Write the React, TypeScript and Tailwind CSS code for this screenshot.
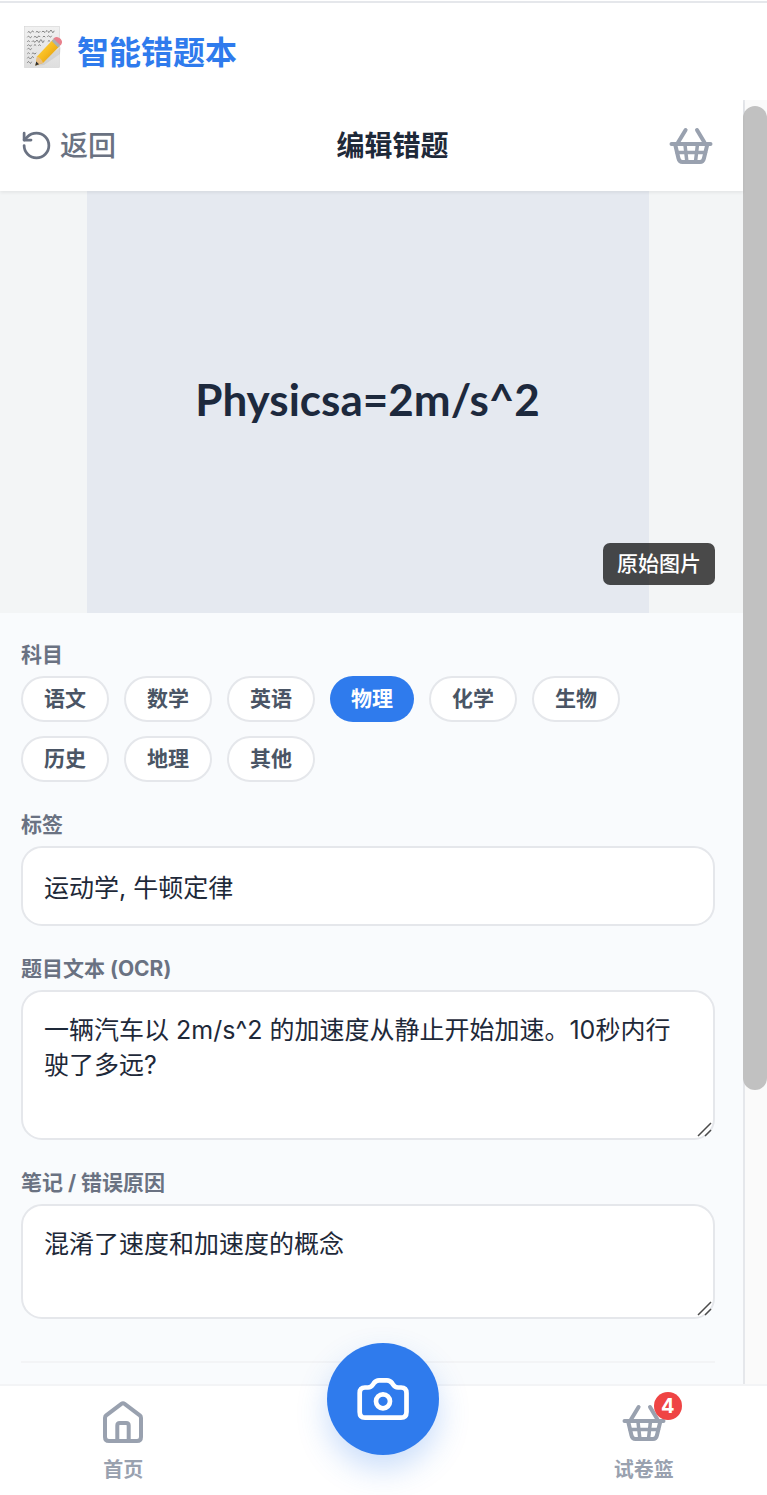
import React, { useState } from "react";
import { RotateCcw } from "lucide-react";

const SUBJECTS = ["语文", "数学", "英语", "物理", "化学", "生物", "历史", "地理", "其他"];

const BasketIcon = () => (
  <svg
    className="w-11 h-11"
    viewBox="0 0 44 44"
    fill="none"
    stroke="currentColor"
    strokeWidth="4"
    strokeLinecap="round"
    strokeLinejoin="round"
    aria-hidden="true"
  >
    <path d="M16.6 6L9 18.5M28 6l7.5 12.5M2.5 20h39" />
    <path d="M6.3 21l3.2 13.5Q10.3 38 13.5 38H31q3.1 0 3.9-3.5L38.2 21" />
    <path d="M16 21l1.8 16M28.4 21l-1.8 16M8 28.6h28.5" strokeWidth="3.5" />
  </svg>
);

const HomeIcon = () => (
  <svg
    className="w-11 h-11"
    viewBox="0 0 44 44"
    fill="none"
    stroke="currentColor"
    strokeWidth="4"
    strokeLinejoin="round"
    aria-hidden="true"
  >
    <path d="M4 17q0-1.6 1.2-2.6L20.4 2.8q1.6-1.2 3.2 0l15.2 11.6Q40 15.4 40 17v19q0 4-4 4H8q-4 0-4-4z" />
    <path d="M16.3 39V24.5q0-2.5 2.5-2.5h6.4q2.5 0 2.5 2.5V39" />
  </svg>
);

const CameraIcon = () => (
  <svg
    className="w-14 h-14"
    viewBox="0 0 56 56"
    fill="none"
    stroke="currentColor"
    strokeWidth="4.7"
    strokeLinejoin="round"
    aria-hidden="true"
  >
    <path d="M4.7 22q0-5.5 5.3-5.5h3q3 0 5-3l1-1.5q2-2.7 5-2.7h8q3 0 5 2.7l1 1.5q2 3 5 3h3q5.5 0 5.5 5.5v19q0 5.7-5.5 5.7H10q-5.3 0-5.3-5.7z" />
    <circle cx="28" cy="30.3" r="7" />
  </svg>
);

const MemoIcon = () => (
  <svg className="w-10 h-11" viewBox="0 0 40 44" fill="none" aria-hidden="true">
    <defs>
      <linearGradient id="paper" x1="0" y1="0" x2="0" y2="1">
        <stop offset="0" stopColor="#f1f1f1" />
        <stop offset="1" stopColor="#dedede" />
      </linearGradient>
      <linearGradient id="pencil" x1="0" y1="0" x2="1" y2="1">
        <stop offset="0" stopColor="#ffdf55" />
        <stop offset="0.5" stopColor="#f6b91d" />
        <stop offset="1" stopColor="#c98512" />
      </linearGradient>
    </defs>
    <rect x="1.5" y="1.5" width="35" height="41" fill="url(#paper)" stroke="#d2d2d2" strokeWidth="0.6" />
    <g stroke="#777" strokeWidth="0.9" strokeLinecap="round">
      <path d="M5 7.2q1-2 1.5 0t2-.3 2 0M13 7q1-1.5 2 0t2-.4M19 6.8q1-1.5 2 0t2-.4 2 .2 2-.4 2 .3 2-.4" />
      <path d="M4.500 12q1-2 2 0t2-.3M11 12q1-1.500 2 0t2-.3 2 0M20 11.800q1-1.800 2 0M24.500 11.500q1-1.800 2 0t2-.4" />
      <path d="M4.500 16.500q1-2.200 2 0M9 16.500q1-1.800 2 0t2-.4 2 .3 2-.5 2 .3 2-.4M25 16.200q1-1.800 2 0" />
      <path d="M4.500 20.500q1-1.800 2 0t2-.4M11 20.300q1-1.900 2 0M15.500 20.300q1-1.500 2 0" />
      <path d="M4.500 24q1-1.800 2 0t2-.3" />
      <path d="M4.500 28.500q1-2 2 0M9 28.500q1-1.500 2 0t2-.4" />
      <path d="M4.500 33q1-2.200 2 0t2-.4 2 0" />
      <path d="M4.500 37.500q1-2.300 2 0t2-.4" />
    </g>
    <path d="M12 41L38 22l-1 7-16 11z" fill="#777" opacity="0.15" />
    <path d="M14 31.5L30 14.500l6.800 6.500L20 38 12.500 40.500z" fill="url(#pencil)" />
    <path d="M14 31.500q4.500 1.500 6 6.500l-7.500 2.500z" fill="#e8be85" />
    <path d="M13.200 36.500l2.900 2.800-3.900 1.500z" fill="#303030" />
    <path d="M28.700 15.900l2.500-2.600 6.500 6.300-2.600 2.800z" fill="#a8b1b5" />
    <path d="M31.500 13.600q2.500-2 5.200.5t.8 5.300z" fill="#e8808c" stroke="#e8808c" strokeWidth="1.5" />
  </svg>
);

const ResizeGrip = () => (
  <svg
    className="absolute right-[2px] bottom-[2px] w-4 h-4 pointer-events-none"
    viewBox="0 0 16 16"
    fill="none"
    stroke="#4b4b4b"
    strokeWidth="1.5"
    aria-hidden="true"
  >
    <path d="M1 14L14 1M8 14l6-6" />
  </svg>
);

const labelStyles = "block pt-px mb-[7px] text-[21px] leading-7 font-bold text-gray-500";
const fieldStyles =
  "block w-full rounded-[21px] border-2 border-[#e5e7eb] bg-white px-[21px] text-[25px] leading-[35px] text-gray-800 outline-none focus:border-blue-400";

export default function App() {
  const [subject, setSubject] = useState("物理");
  const [tags, setTags] = useState("运动学, 牛顿定律");
  const [question, setQuestion] = useState(
    "一辆汽车以 2m/s^2 的加速度从静止开始加速。10秒内行驶了多远?"
  );
  const [notes, setNotes] = useState("混淆了速度和加速度的概念");

  return (
    <div className="min-h-screen flex flex-col bg-white font-[Inter,'Noto_Sans_CJK_SC',sans-serif]">
      <header className="mt-px h-[99px] shrink-0 flex items-start gap-[14px] border-t-2 border-gray-200 px-[23px] pt-[22px]">
        <MemoIcon />
        <h1 className="mt-[5px] text-[32px] leading-[46px] font-bold text-[#2f7bed]">智能错题本</h1>
      </header>

      <div className="flex-1 flex">
        <main className="flex-1 min-w-0 bg-[#f9fbfd]">
          {/* Toolbar */}
          <div className="relative h-[91px] bg-white shadow-[0_2px_3px_rgba(0,0,0,0.06)] z-10 flex items-center justify-between pl-5 pr-[30px]">
            <button className="flex items-center gap-[7px] text-[28px] leading-9 font-medium text-gray-500">
              <RotateCcw className="w-[33px] h-[33px]" />
              返回
            </button>
            <h2 className="text-[28px] leading-9 font-bold text-gray-800">编辑错题</h2>
            <button className="text-gray-400" aria-label="试卷篮">
              <BasketIcon />
            </button>
          </div>

          {/* Original image */}
          <div className="relative flex justify-center bg-[#f3f5f6] pr-2">
            <div className="w-[562px] h-[422px] flex items-center justify-center bg-[#e5e9f0] pb-[6px] font-[Lato,sans-serif] text-[44px] leading-none font-bold text-slate-800">
              Physicsa=2m/s^2
            </div>
            <span className="absolute right-7 bottom-7 rounded-[7px] bg-black/70 px-[14px] py-[6px] text-[21px] leading-[30px] font-medium text-white">
              原始图片
            </span>
          </div>

          <form className="flex flex-col gap-7 pt-[27px] pl-[21px] pr-7" onSubmit={(e) => e.preventDefault()}>
            <fieldset>
              <legend className={labelStyles}>科目</legend>
              <div className="flex flex-wrap gap-x-[15px] gap-y-[14px]">
                {SUBJECTS.map((s) => (
                  <button
                    key={s}
                    type="button"
                    aria-pressed={s === subject}
                    onClick={() => setSubject(s)}
                    className={`h-[46px] rounded-full px-[21px] text-[21px] leading-7 font-bold ${
                      s === subject
                        ? "bg-[#2f7bed] text-white"
                        : "border-2 border-[#e5e7eb] bg-white text-gray-600"
                    }`}
                  >
                    {s}
                  </button>
                ))}
              </div>
            </fieldset>

            <div>
              <label htmlFor="tags" className={labelStyles}>标签</label>
              <input
                id="tags"
                value={tags}
                onChange={(e) => setTags(e.target.value)}
                className={`${fieldStyles} h-20`}
              />
            </div>

            <div>
              <label htmlFor="question" className={labelStyles}>题目文本 (OCR)</label>
              <div className="relative">
                <textarea
                  id="question"
                  value={question}
                  onChange={(e) => setQuestion(e.target.value)}
                  className={`${fieldStyles} h-[150px] py-[21px] resize-none`}
                />
                <ResizeGrip />
              </div>
            </div>

            <div>
              <label htmlFor="notes" className={labelStyles}>笔记 / 错误原因</label>
              <div className="relative">
                <textarea
                  id="notes"
                  value={notes}
                  onChange={(e) => setNotes(e.target.value)}
                  className={`${fieldStyles} h-[115px] py-[21px] resize-none`}
                />
                <ResizeGrip />
              </div>
            </div>

            <div className="mt-[14px] h-[22px] border-t-2 border-gray-100" />
          </form>
        </main>

        {/* Scroll track */}
        <div className="w-6 shrink-0 flex flex-col border-l-2 border-gray-200 bg-[#fafafa] pt-[6px]" aria-hidden="true">
          <div className="-ml-[2px] h-[77%] rounded-full bg-[#c1c1c1]" />
        </div>
      </div>

      <nav className="relative z-20 h-[111px] shrink-0 grid grid-cols-3 gap-[14px] border-t-2 border-gray-100 bg-white text-[20px] leading-7 font-bold text-gray-400">
        <a href="#home" className="flex flex-col items-center gap-[11px] pt-[15px]">
          <HomeIcon />
          首页
        </a>
        <div className="flex justify-center">
          <button
            aria-label="拍照"
            className="-mt-[43px] w-28 h-28 rounded-full bg-[#2f7bed] text-white flex items-center justify-center shadow-[0_14px_30px_rgba(47,123,237,0.25)]"
          >
            <CameraIcon />
          </button>
        </div>
        <a href="#basket" className="flex flex-col items-center gap-[11px] pt-[15px]">
          <span className="relative">
            <BasketIcon />
            <span className="absolute -top-[9px] -right-4 w-7 h-7 rounded-full bg-[#ef4444] text-center text-[20px] leading-7 text-white">
              4
            </span>
          </span>
          试卷篮
        </a>
      </nav>
    </div>
  );
}
